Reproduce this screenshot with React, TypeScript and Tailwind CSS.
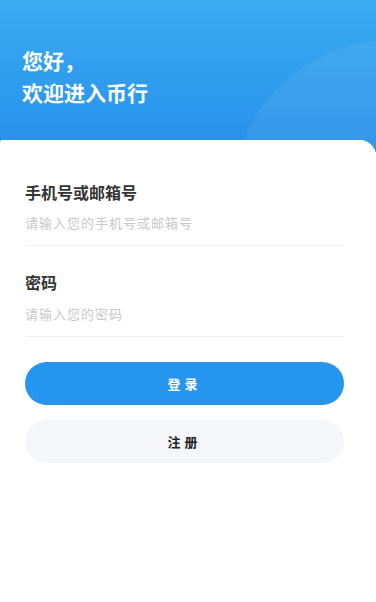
import React from 'react';

export default function App() {
  return (
    <div
      className="relative w-[376px] h-[602px] overflow-hidden bg-white"
      style={{ fontFamily: '"Noto Sans CJK SC", "Noto Sans", sans-serif' }}
    >
      {/* Header */}
      <div className="relative h-[152px] bg-gradient-to-b from-[#3aabf3] to-[#2790ea] overflow-hidden">
        <div className="absolute left-[232px] top-[40px] w-[320px] h-[320px] rounded-full bg-white/[0.06]" />
        <div className="relative pl-[22px] pt-[44px] text-white font-bold text-[21px] leading-[32px]">
          <div>您好，</div>
          <div>欢迎进入币行</div>
        </div>
      </div>

      {/* Card */}
      <div className="relative -mt-[12px] rounded-tr-[16px] rounded-tl-[2px] bg-white px-[25px] pt-[41px]">
        <div className="w-[319px]">
          <div className="text-[16px] font-bold text-[#333] leading-[22px]">手机号或邮箱号</div>
          <div className="mt-[11px] pb-[13px] text-[13px] tracking-[1px] text-[#c8c8c8] leading-[18px] border-b border-[#f0f0f0]">
            请输入您的手机号或邮箱号
          </div>

          <div className="mt-[25px] text-[16px] font-bold text-[#333] leading-[22px]">密码</div>
          <div className="mt-[12px] pb-[13px] text-[13px] tracking-[1px] text-[#c8c8c8] leading-[18px] border-b border-[#f0f0f0]">
            请输入您的密码
          </div>

          <button className="mt-[25px] w-full h-[43px] rounded-full bg-[#2595ee] text-white text-[13px] font-bold tracking-[4px]">
            登录
          </button>
          <button className="mt-[15px] w-full h-[43px] rounded-full bg-[#f5f6fa] text-[#222] text-[13px] font-bold tracking-[4px]">
            注册
          </button>
        </div>
      </div>
    </div>
  );
}
